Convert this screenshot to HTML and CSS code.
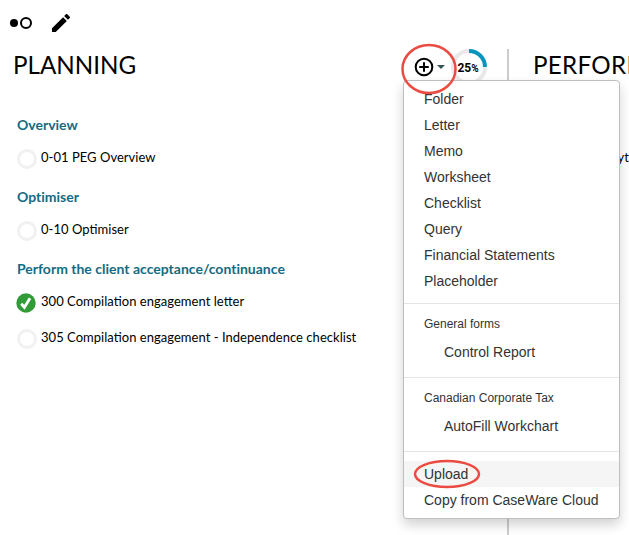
FILE: index.html
```
<!DOCTYPE html>
<html lang="en">
<head>
<meta charset="utf-8">
<title>Engagement documents</title>
<link rel="stylesheet" href="styles.css">
</head>
<body>
<div class="page">
  <div class="toolbar">
    <svg class="view-icon" width="24" height="14" viewBox="0 0 24 14"><circle cx="5" cy="7" r="4"/><circle cx="17" cy="7" r="5" fill="none" stroke="#000" stroke-width="2"/></svg>
    <svg width="18" height="18" viewBox="3 3 18 18"><path d="M3 17.25V21h3.75L17.81 9.94l-3.75-3.75L3 17.25zM20.71 7.04a1 1 0 0 0 0-1.41l-2.34-2.34a1 1 0 0 0-1.41 0l-1.83 1.83 3.75 3.75 1.83-1.83z"/></svg>
  </div>
  <main class="board">
    <section class="phase">
      <header class="phase-head">
        <h1>PLANNING</h1>
        <div class="actions">
          <button class="add" aria-label="Add">
            <svg width="32" height="20" viewBox="0 0 32 20"><circle cx="10" cy="10" r="8.3" fill="none" stroke="#000" stroke-width="2"/><path d="M10 5.2v9.6M5.2 10h9.6" stroke="#000" stroke-width="2"/><path d="M23 8h8l-4 4z" fill="#36575a"/></svg>
          </button>
          <div class="progress">
            <svg width="36" height="36" viewBox="0 0 36 36" fill="none" stroke-width="4"><circle cx="18" cy="18" r="16" stroke="#e9e9e9"/><path d="M18 2a16 16 0 0 1 16 16" stroke="#0795bd"/></svg>
            <span class="percent">25<small>%</small></span>
          </div>
        </div>
      </header>
      <div class="group">
        <h2>Overview</h2>
        <div class="doc"><span class="status"></span><span>0-01 PEG Overview</span></div>
      </div>
      <div class="group">
        <h2>Optimiser</h2>
        <div class="doc"><span class="status"></span><span>0-10 Optimiser</span></div>
      </div>
      <div class="group">
        <h2>Perform the client acceptance/continuance</h2>
        <div class="doc"><svg class="done" width="20" height="20" viewBox="0 0 20 20"><circle cx="10" cy="10" r="9.7" fill="#319b37"/><path d="M5.2 10.7l3.2 3.6 5.6-9" fill="none" stroke="#fff" stroke-width="2.8"/></svg><span>300 Compilation engagement letter</span></div>
        <div class="doc"><span class="status"></span><span>305 Compilation engagement - Independence checklist</span></div>
      </div>
    </section>
    <section class="phase next">
      <header class="phase-head"><h1>PERFORM</h1></header>
      <div class="doc next-doc">yt</div>
    </section>
  </main>
  <nav class="menu">
    <a class="item">Folder</a>
    <a class="item">Letter</a>
    <a class="item">Memo</a>
    <a class="item">Worksheet</a>
    <a class="item">Checklist</a>
    <a class="item">Query</a>
    <a class="item">Financial Statements</a>
    <a class="item">Placeholder</a>
    <div class="section">
      <div class="label">General forms</div>
      <a class="item nested">Control Report</a>
    </div>
    <div class="section">
      <div class="label">Canadian Corporate Tax</div>
      <a class="item nested">AutoFill Workchart</a>
    </div>
    <div class="section">
      <a class="item active">Upload</a>
      <a class="item">Copy from CaseWare Cloud</a>
    </div>
  </nav>
  <svg class="mark mark-add" width="58" height="52" viewBox="0 0 58 52"><ellipse cx="29" cy="26" rx="26.5" ry="24"/></svg>
  <svg class="mark mark-upload" width="68" height="30" viewBox="0 0 68 30"><ellipse cx="34" cy="15" rx="32" ry="13"/></svg>
</div>
</body>
</html>
```
FILE: styles.css
```
* { box-sizing: border-box; }
body { margin: 0; background: #fff; color: #000; font-family: Lato, sans-serif; }
h1, h2 { margin: 0; }
svg { display: block; flex: none; }
.page { position: relative; width: 629px; height: 535px; overflow: hidden; }
.toolbar { display: flex; align-items: center; gap: 19px; height: 49px; padding: 0 0 3px 9px; }
.board { display: flex; height: 486px; }
.phase { flex: none; width: 507px; padding-left: 13px; }
.phase-head { display: flex; justify-content: space-between; height: 36px; margin-bottom: 30px; padding-right: 20px; }
.phase-head h1 { font-size: 24.2px; font-weight: 400; line-height: 32px; }
.next { width: 200px; border-left: 2px solid #ccc; padding-left: 24px; }
.next h1 { letter-spacing: .3px; }
.actions { display: flex; gap: 5px; }
.add { padding: 0; border: 0; background: none; }
.progress { display: grid; }
.progress > * { grid-area: 1 / 1; }
.percent { align-self: center; justify-self: center; padding: 2px 2px 0 0; font-family: Roboto, sans-serif; font-size: 12px; font-weight: 700; }
.percent small { font-size: 10px; }
.group { padding: 0 0 2px 4px; }
.group h2 { height: 20px; color: #146b83; font-size: 14px; font-weight: 700; line-height: 20px; font-variant-ligatures: none; }
.doc { display: flex; gap: 4px; height: 36px; font-size: 13px; letter-spacing: .03px; font-feature-settings: "liga" 1; line-height: 16px; white-space: nowrap; }
.group .doc:first-of-type { margin-top: 14px; }
.status { width: 20px; height: 20px; border: 3px solid #f1f1f1; border-radius: 50%; }
.done { margin-left: -1px; margin-right: 1px; }
.next-doc { width: 96px; margin-top: 64px; justify-content: flex-end; }
.menu { position: absolute; left: 403px; top: 80px; width: 217px; height: 439px; padding: 5px 0; border: 1px solid #bfbfbf; border-radius: 4px; background: #fff; box-shadow: 0 6px 12px rgba(0,0,0,.175); color: #333; font-family: "Liberation Sans", Arial, sans-serif; }
.item { display: block; height: 26px; padding-left: 20px; font-size: 14px; line-height: 26px; white-space: nowrap; }
.section { height: 65px; margin-top: 9px; padding-top: 9px; border-top: 1px solid #e5e5e5; }
.label { height: 26px; padding-left: 20px; font-size: 12px; line-height: 22px; }
.nested { padding-left: 40px; }
.active { background: #f5f5f5; }
.mark { position: absolute; fill: none; stroke: #ea4b42; stroke-width: 2.5; }
.mark-add { left: 400px; top: 43px; }
.mark-upload { left: 413px; top: 459px; }
```
